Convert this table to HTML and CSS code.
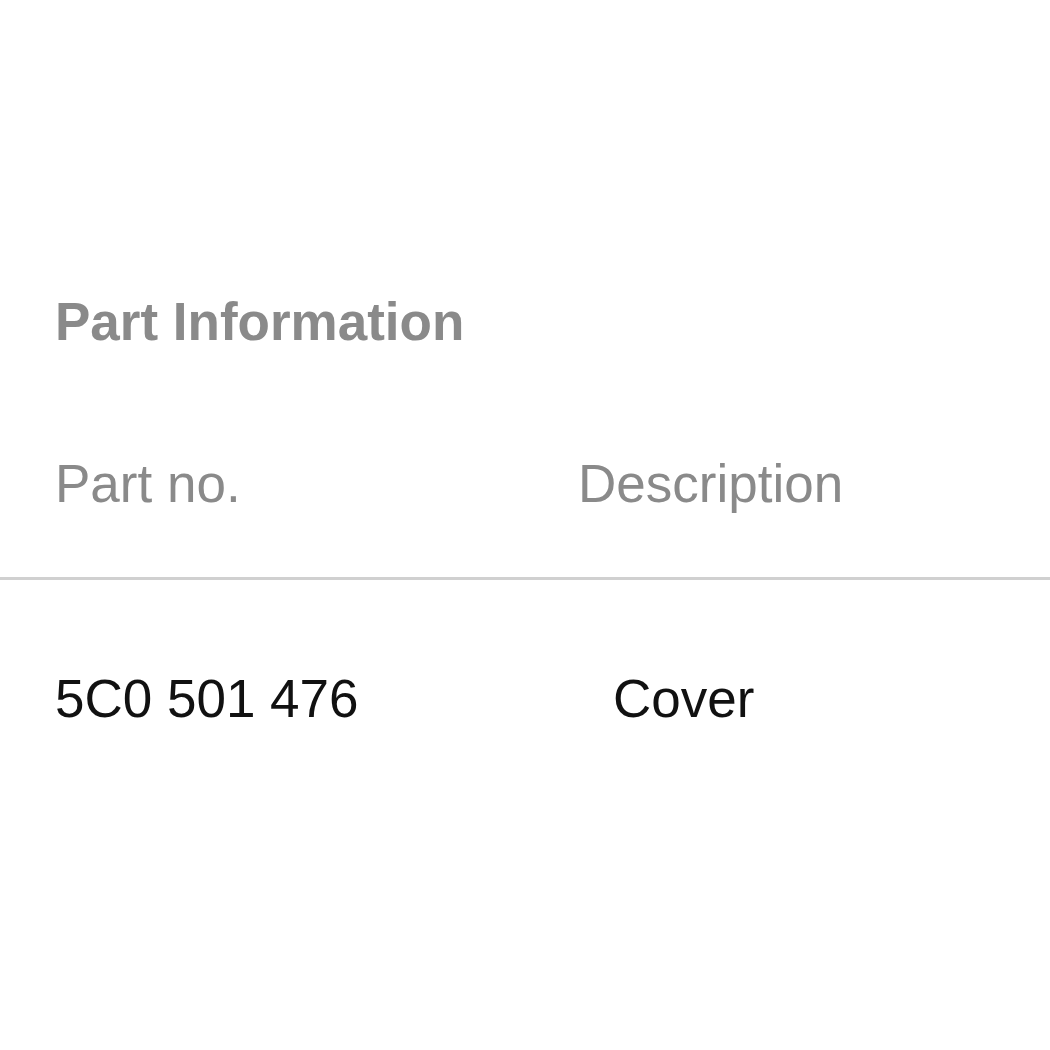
FILE: index.html
```html
<!DOCTYPE html>
<html lang="en">
<head>
  <meta charset="UTF-8">
  <meta name="viewport" content="width=device-width, initial-scale=1.0">
  <link rel="stylesheet" href="styles.css">
  <title>Part Information</title>
</head>
<body>

<div class="part-info">
  <h2 class="tittle">Part Information</h2>

  <table class="parts">
    <thead>
      <tr>
        <th class="col-no">Part no.</th>
        <th class="col-desc">Description</th>
      </tr>
    </thead>
    <tbody>
      <tr>
        <td class="col-no">5C0 501 476</td>
        <td class="col-desc">Cover</td>
      </tr>
    </tbody>
  </table>
</div>

</body>
</html>
```

FILE: styles.css
```css
body {
  margin: 0;
  font-family: 'Liberation Sans', Arial, sans-serif;
  background-color: #fff;
  color: #111;
}

.part-info {
  padding-top: 292px;
}

.tittle {
  margin: 0 0 102px 55px;
  font-size: 53px;
  line-height: 60px;
  font-weight: bold;
  color: #8a8a8a;
}

.parts {
  width: 100%;
  border-collapse: collapse;
  font-size: 53px;
  line-height: 60px;
}

.parts th {
  text-align: left;
  font-weight: normal;
  color: #8a8a8a;
  padding: 0 0 63px 0;
  border-bottom: 3px solid #d0d0d0;
}

.parts td {
  padding: 89px 0 0 0;
  color: #111;
}

.parts .col-no {
  width: 523px;
  padding-left: 55px;
}

th.col-desc {
  padding-left: 0;
}

td.col-desc {
  padding-left: 35px;
}
```
